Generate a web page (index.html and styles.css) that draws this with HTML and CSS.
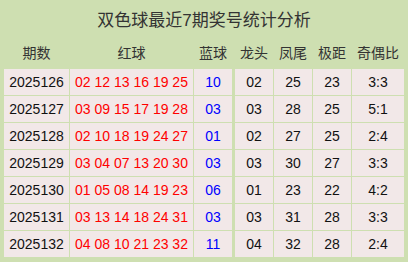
FILE: index.html
```html
<!DOCTYPE html>
<html lang="zh">
<head>
<meta charset="utf-8">
<title>双色球最近7期奖号统计分析</title>
<link rel="stylesheet" href="styles.css">
</head>
<body>
<div class="panel">
  <div class="title">双色球最近7期奖号统计分析</div>
  <table class="stats">
    <colgroup>
      <col class="c-issue"><col class="c-red"><col class="c-blue"><col class="c-n"><col class="c-n"><col class="c-n"><col class="c-ratio">
    </colgroup>
    <thead>
      <tr><th>期数</th><th>红球</th><th class="sep">蓝球</th><th>龙头</th><th>凤尾</th><th>极距</th><th>奇偶比</th></tr>
    </thead>
    <tbody>
      <tr><td>2025126</td><td class="red">02 12 13 16 19 25</td><td class="blue sep">10</td><td>02</td><td>25</td><td>23</td><td>3:3</td></tr>
      <tr><td>2025127</td><td class="red">03 09 15 17 19 28</td><td class="blue sep">03</td><td>03</td><td>28</td><td>25</td><td>5:1</td></tr>
      <tr><td>2025128</td><td class="red">02 10 18 19 24 27</td><td class="blue sep">01</td><td>02</td><td>27</td><td>25</td><td>2:4</td></tr>
      <tr><td>2025129</td><td class="red">03 04 07 13 20 30</td><td class="blue sep">03</td><td>03</td><td>30</td><td>27</td><td>3:3</td></tr>
      <tr><td>2025130</td><td class="red">01 05 08 14 19 23</td><td class="blue sep">06</td><td>01</td><td>23</td><td>22</td><td>4:2</td></tr>
      <tr><td>2025131</td><td class="red">03 13 14 18 24 31</td><td class="blue sep">03</td><td>03</td><td>31</td><td>28</td><td>3:3</td></tr>
      <tr><td>2025132</td><td class="red">04 08 10 21 23 32</td><td class="blue sep">11</td><td>04</td><td>32</td><td>28</td><td>2:4</td></tr>
    </tbody>
  </table>
</div>
</body>
</html>
```

FILE: styles.css
```css
html, body {
  margin: 0;
  padding: 0;
  background: #cedfb1;
}
body {
  font-family: "Liberation Sans", "Noto Sans CJK SC", sans-serif;
  width: 408px;
  height: 262px;
  overflow: hidden;
}
.panel {
  padding: 0 3px 4px 3px;
}
.title {
  height: 41px;
  line-height: 41px;
  text-align: center;
  font-size: 17px;
  color: #333;
}
.stats {
  border-collapse: separate;
  border-spacing: 1px;
  table-layout: fixed;
  width: 402px;
  font-size: 14px;
}
.c-issue { width: 65px; }
.c-red { width: 123px; }
.c-blue { width: 40px; }
.c-n { width: 38px; }
.c-ratio { width: 52px; }
.stats th {
  font-weight: normal;
  color: #333;
  height: 22px;
  padding: 0 0 4px 0;
  line-height: 22px;
  text-align: center;
}
.stats td {
  background: #f2e8e8;
  height: 26px;
  padding: 0;
  line-height: 26px;
  text-align: center;
  color: #111;
  white-space: nowrap;
}
.stats .sep {
  border-right: 2px solid transparent;
  background-clip: padding-box;
}
.stats td.red { color: #f00; }
.stats td.blue { color: #00f; }
```
